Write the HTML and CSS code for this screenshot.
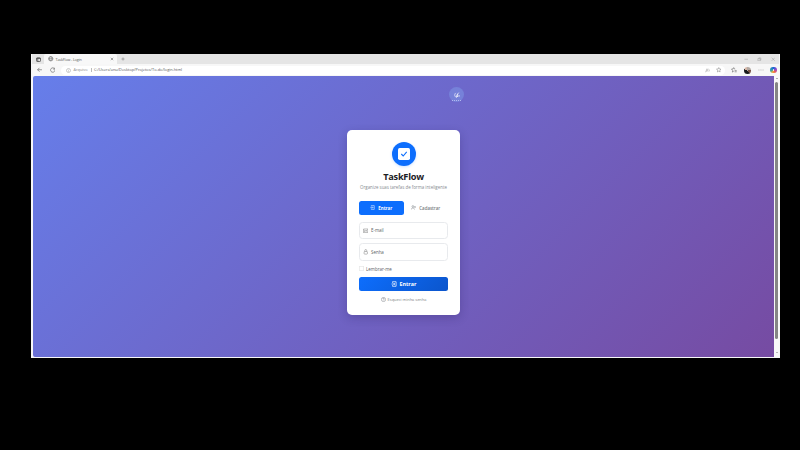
FILE: index.html
```
<!DOCTYPE html>
<html lang="pt-BR">
<head>
<meta charset="utf-8">
<title>TaskFlow - Login</title>
<link rel="stylesheet" href="styles.css">
</head>
<body>
<div class="window">
  <div class="tabs">
    <svg class="workspace" viewBox="0 0 10 10"><rect x="1" y="1.5" width="8" height="7.5" rx="1.5"/><path d="M1 3h8M3.5 3v6"/></svg>
    <div class="tab">
      <svg class="globe" viewBox="0 0 10 10"><circle cx="5" cy="5" r="4"/><path d="M1 5h8M5 1c-3 3-3 5 0 8c3-3 3-5 0-8"/></svg>
      <span class="tab-title">TaskFlow - Login</span>
      <svg class="close" viewBox="0 0 10 10"><path d="M2 2l6 6M8 2l-6 6"/></svg>
    </div>
    <svg class="plus" viewBox="0 0 10 10"><path d="M5 1v8M1 5h8"/></svg>
    <div class="controls">
      <svg viewBox="0 0 10 10"><path d="M1 5h8"/></svg>
      <svg viewBox="0 0 10 10"><path d="M2 3.500h5v5H2zM4 3V2h4.500v5H7"/></svg>
      <svg viewBox="0 0 10 10"><path d="M1.500 1.500l7 7M8.500 1.500l-7 7"/></svg>
    </div>
  </div>
  <div class="toolbar">
    <svg class="nav back" viewBox="0 0 10 10"><path d="M9 5H1M4.500 1.500L1 5l3.500 3.500"/></svg>
    <svg class="nav" viewBox="0 0 10 10"><path d="M8.500 3.500A4 4 0 1 0 9 6M9 1v3H6"/></svg>
    <div class="address">
      <svg class="info" viewBox="0 0 10 10"><circle cx="5" cy="5" r="4"/><path d="M5 4.500v3M5 2.500v.7"/></svg>
      <span class="scheme">Arquivo</span><span class="divider"></span>
      <span class="url">C:/Users/anu/Desktop/Projetos/To-do/login.html</span>
      <svg class="read" viewBox="0 0 10 10"><path d="M1 8.500l3-7l2 5M2 6h3M7 2c2 1 2 3 1 5"/></svg>
      <svg class="star" viewBox="0 0 10 10"><path d="M5 1l1.200 2.700 2.900.3-2.200 2 .6 3L5 7.500 2.500 9l.6-3-2.200-2 2.900-.3z"/></svg>
    </div>
    <svg class="tool" viewBox="0 0 10 10"><path d="M7 3.500L5.500 3.200 4.500 1 3.400 3.200.8 3.500l2 2-.5 3 2.200-1.200M6 6h3.500M6 8h3.500"/></svg>
    <span class="avatar"></span>
    <svg class="tool dots" viewBox="0 0 10 10"><path d="M1 5h1.200M4.400 5h1.200M7.800 5H9"/></svg>
    <span class="copilot"></span>
  </div>
  <div class="viewport">
    <main class="page">
      <section class="card">
        <div class="logo"><svg viewBox="0 0 24 24"><rect x="6" y="6" width="12" height="12" rx="1.700" fill="#fff"/><path d="M9.300 12l1.900 2 3.500-4.200" fill="none" stroke="#0d6efd" stroke-width="1.100"/></svg></div>
        <h1>TaskFlow</h1>
        <p class="subtitle">Organize suas tarefas de forma inteligente</p>
        <div class="switch">
          <button class="active"><svg viewBox="0 0 10 10"><path d="M2.500 3V1.200h6v7.600h-6V7M.8 5H6M4.500 3.200L6.300 5 4.500 6.800"/></svg>Entrar</button>
          <button><svg viewBox="0 0 10 10"><circle cx="3.800" cy="3" r="1.800"/><path d="M.5 9c0-4 6.500-4 6.500 0M8 2.500v3M6.500 4h3"/></svg>Cadastrar</button>
        </div>
        <div class="field"><svg viewBox="0 0 10 10"><rect x=".7" y="1.800" width="8.600" height="6.500" rx=".8"/><path d="M.8 3L5 5.500 9.200 3M1 8l3-3M9 8L6 5"/></svg>E-mail</div>
        <div class="field second"><svg viewBox="0 0 10 10"><rect x="2" y="4.500" width="6" height="4.800" rx="1"/><path d="M3.300 4.500v-2c0-2.200 3.400-2.200 3.400 0v2"/></svg>Senha</div>
        <label class="remember"><span class="box"></span>Lembrar-me</label>
        <button class="submit"><svg viewBox="0 0 10 10"><path d="M2.500 3V1.200h6v7.600h-6V7M.8 5H6M4.500 3.200L6.300 5 4.500 6.800"/></svg>Entrar</button>
        <div class="forgot"><svg viewBox="0 0 10 10"><circle cx="5" cy="5" r="4.200"/><path d="M3.500 4c0-2 3-2 3 0 0 1-1.500 1-1.500 2M5 7v.8"/></svg>Esqueci minha senha</div>
      </section>
      <div class="theme"><svg viewBox="0 0 10 10"><path d="M3 1.500C0 4 1 9 5 8.800M8 1L4.500 5.500 4 8l3-1M6 3v5M8.500 5v3"/></svg><i></i></div>
    </main>
    <div class="scroll"><i class="up"></i><i class="thumb"></i><i class="down"></i></div>
  </div>
</div>
</body>
</html>
```
FILE: styles.css
```
* { box-sizing: border-box; }
body { margin: 0; height: 450px; overflow: hidden; background: #000; padding: 54px 20px 0 31px; font-family: "Open Sans", "Noto Sans", sans-serif; }
svg { display: block; flex: none; fill: none; stroke: currentColor; stroke-width: 1; }
button { border: 0; padding: 0; background: none; font: inherit; color: inherit; }
.window { height: 304px; background: #f7f7f7; display: flex; flex-direction: column; padding: 0 1px 1px; }
.tabs { height: 10px; background: #e5e5e5; display: flex; align-items: center; color: #555; }
.workspace { width: 5px; height: 5px; margin: 0 3px 0 4px; color: #444; stroke-width: 1.500; }
.tab { width: 73px; height: 10px; padding: 0 3px 0 4px; background: #f8f8f8; border-radius: 2px 2px 0 0; display: flex; align-items: center; }
.globe { width: 5.500px; height: 5.500px; margin-right: 2px; stroke-width: 1.200; color: #777; }
.tab-title { font-size: 3.700px; line-height: 5px; letter-spacing: -.12px; color: #555; }
.close { width: 4px; height: 4px; margin-left: auto; color: #444; stroke-width: 1.200; }
.plus { width: 4px; height: 4px; margin-left: 4px; }
.controls { margin-left: auto; display: flex; gap: 9px; padding-right: 4px; color: #999; }
.controls svg { width: 4.500px; height: 4.500px; }
.toolbar { height: 12px; display: flex; align-items: center; background: #f7f7f7; color: #666; }
.nav { width: 5.500px; height: 5.500px; margin-right: 7px; stroke-width: 1.200; }
.back { margin-left: 5px; }
.address { height: 9px; border-radius: 5px; background: #fff; margin-left: -1px; padding-left: 5px; padding-right: 4px; display: flex; align-items: center; margin-right: 6px; font-size: 3.900px; line-height: 6px; flex: 1; }
.info { width: 5px; height: 5px; margin-right: 2.500px; color: #999; }
.scheme { color: #888; }
.divider { width: .5px; height: 4px; background: #bbb; margin: 0 3px; }
.url { color: #555; white-space: nowrap; }
.read { width: 5px; height: 5px; margin-left: auto; color: #999; }
.star { width: 5.500px; height: 5.500px; margin-left: 6px; color: #888; }
.tool { width: 6px; height: 6px; }
.avatar { width: 7px; height: 7px; border-radius: 50%; margin: 0 7px; background: conic-gradient(#b4aaa4 0 20%, #765043 20% 40%, #18191b 40% 82%, #d7b7a7 82%); }
.dots { color: #888; stroke-width: 1.300; }
.copilot { width: 7px; height: 6px; border-radius: 3px; margin: 0 2px 0 6px; background: radial-gradient(circle, #fff 0 8%, transparent 22%), conic-gradient(#1c63d7, #9b4ac9 22%, #ed5b55 40%, #f3aa35 55%, #30a7a8 73%, #1c63d7); }
.viewport { flex: 1; display: flex; min-height: 0; padding-left: 1px; }
.page { position: relative; flex: 1; background: linear-gradient(135deg, #667eea, #764ba2); border-radius: 2px 0 0 2px; padding: 54px 0 0 314px; }
.scroll { width: 5px; background: #f8f8f8; display: flex; flex-direction: column; align-items: center; }
.up, .down { width: 0; height: 0; border: 1px solid transparent; }
.up { border-bottom-color: #666; margin: 1px 0 2px; }
.down { border-top-color: #777; margin-top: 13px; }
.thumb { width: 2.500px; height: 257px; flex: none; background: #858585; border-radius: 2px; margin-top: 1px; }
.card { width: 113px; height: 185px; background: #fff; border-radius: 5px; padding: 12px 12px 0; box-shadow: 0 3px 10px rgba(30, 20, 80, .24); display: flex; flex-direction: column; color: #666; }
.logo { width: 24px; height: 24px; border-radius: 50%; background: #0d6efd; align-self: center; box-shadow: 0 1px 3px rgba(13, 110, 253, .2); }
.logo svg { width: 24px; height: 24px; stroke: none; }
h1 { margin: 3.500px 0 0; font-size: 9.200px; line-height: 13px; font-weight: 700; letter-spacing: -.25px; color: #1c2025; text-align: center; }
.subtitle { margin: 1.500px -3px 0; font-size: 4.400px; line-height: 6px; color: #858a90; text-align: center; white-space: nowrap; }
.switch { display: flex; margin-top: 10.500px; height: 14px; }
.switch button { flex: 1; display: flex; justify-content: center; align-items: center; gap: 3px; font-size: 4.400px; font-weight: 600; color: #777c80; border-radius: 2.500px; }
.switch .active { background: #0d6efd; color: #fff; font-weight: 700; }
.switch svg { width: 5px; height: 5px; }
.field { height: 17.500px; margin-top: 7px; border: 1px solid #e8eaed; border-radius: 3.500px; padding-left: 2.500px; display: flex; align-items: center; gap: 3px; font-size: 4.450px; color: #5d6165; }
.second { margin-top: 4px; }
.field svg { width: 5.500px; height: 5.500px; color: #888; }
.remember { display: flex; align-items: center; gap: 2.500px; height: 6px; margin: 5px 0 5.500px; font-size: 4.450px; color: #5c6065; }
.box { width: 4.500px; height: 4.500px; box-shadow: inset 0 0 0 .5px #ddd; border-radius: 1px; }
.submit { height: 13.500px; flex: none; background: linear-gradient(135deg, #0d6efd, #0b55cc); border-radius: 2.500px; color: #fff; font-size: 5.300px; font-weight: 700; display: flex; align-items: center; justify-content: center; gap: 3px; }
.submit svg { width: 6px; height: 6px; stroke-width: 1.200; }
.forgot { display: flex; justify-content: center; align-items: center; gap: 2px; height: 6px; margin-top: 5.500px; font-size: 3.950px; color: #7b7f84; }
.forgot svg { width: 5px; height: 5px; }
.theme { position: absolute; left: 416px; top: 11px; width: 15px; height: 15px; border-radius: 50%; background: #7681d9; color: #fff; display: flex; align-items: center; justify-content: center; }
.theme svg { width: 6px; height: 6px; stroke-width: 1.100; }
.theme i { position: absolute; left: 3px; bottom: 1px; width: 9px; border-bottom: 1px dotted #b4b9ef; }
```
